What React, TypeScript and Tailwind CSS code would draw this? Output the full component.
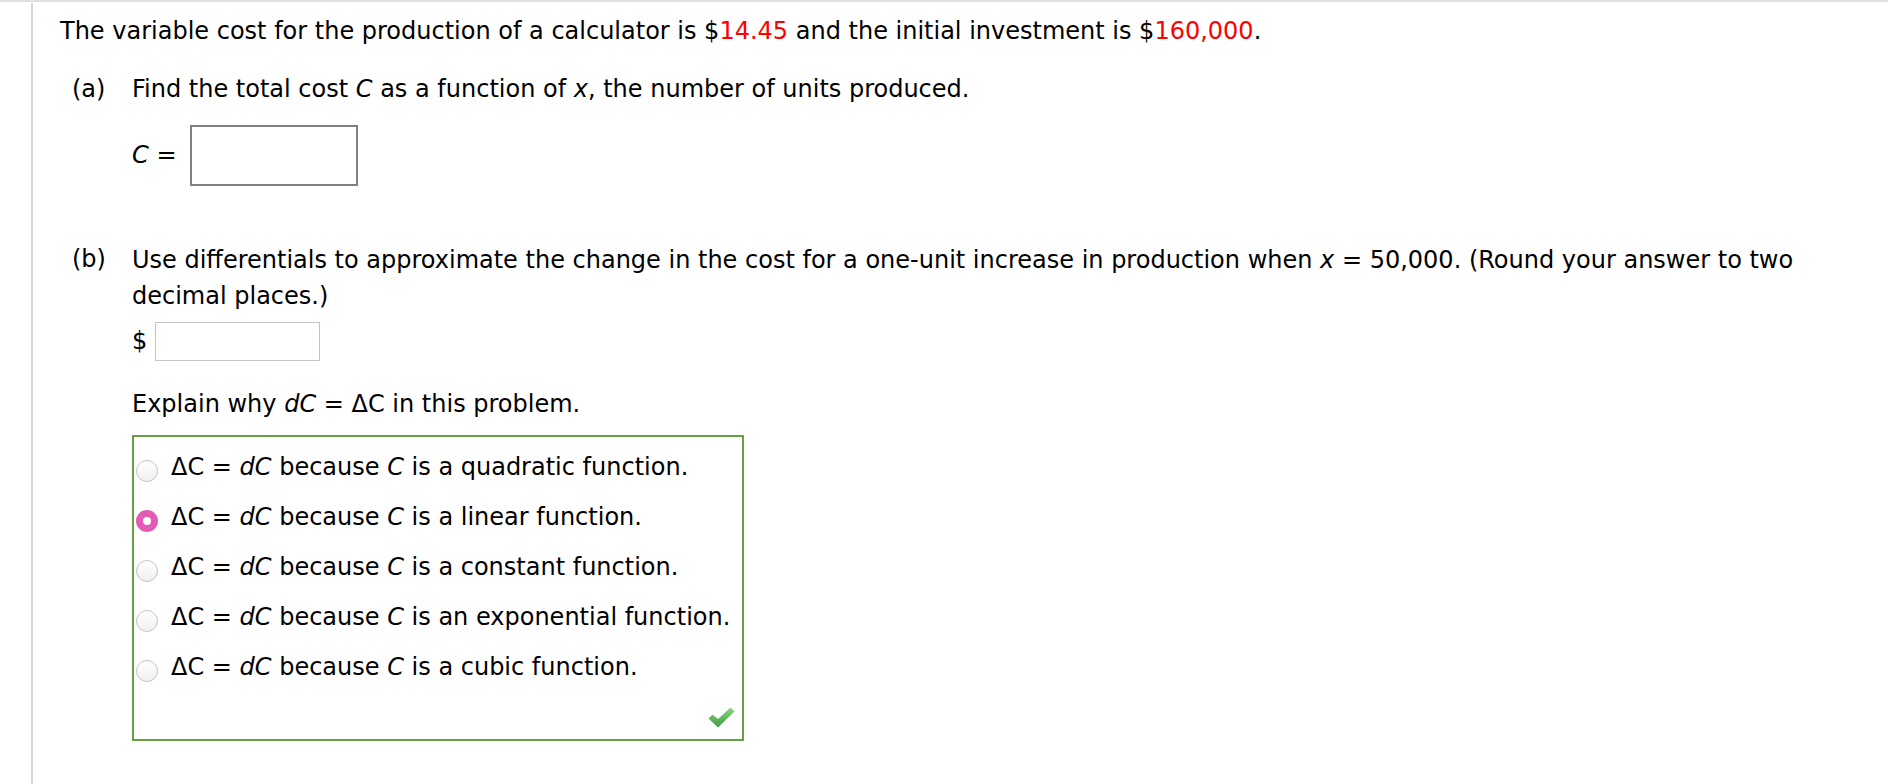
import React from "react";

const Radio = ({ checked }: { checked?: boolean }) =>
  checked ? (
    <span className="ml-[2px] mt-[8px] flex h-[22px] w-[22px] shrink-0 items-center justify-center rounded-full bg-[#e35bb5]">
      <span className="h-[8px] w-[8px] rounded-full bg-white" />
    </span>
  ) : (
    <span className="ml-[2px] mt-[8px] h-[22px] w-[22px] shrink-0 rounded-full border border-[#c4c4c4] bg-linear-to-b from-white to-[#f0f0f0]" />
  );

const Option = ({ text, checked }: { text: string; checked?: boolean }) => (
  <div className="flex h-[50px] items-center">
    <Radio checked={checked} />
    <span className="ml-[13px] whitespace-nowrap">
      {"ΔC = "}
      <i>dC</i> because <i>C</i> is {text}
    </span>
  </div>
);

export default function App() {
  return (
    <div className="min-h-screen bg-white font-['DejaVu_Sans',Verdana,sans-serif] text-[24px] leading-[35px] text-black">
      <div className="h-[2px] bg-[#e0e0e0]" />
      <div className="flex min-h-[782px]">
        <div className="w-[31px] shrink-0" />
        <div className="mt-[1px] flex-1 border-l-2 border-[#d4d4d4] pl-[27px] pr-[40px] pt-[11px]">
          <p>
            The variable cost for the production of a calculator is $
            <span className="text-[#ff0000]">14.45</span> and the initial investment is $
            <span className="text-[#ff0000]">160,000</span>.
          </p>

          <div className="mt-[23px] flex">
            <div className="w-[72px] shrink-0 pl-[12px]">(a)</div>
            <div className="flex-1">
              <p>
                Find the total cost <i>C</i> as a function of <i>x</i>, the number of units produced.
              </p>
              <div className="mt-[18px] flex items-center">
                <span className="mr-[13px]">
                  <i>C</i> =
                </span>
                <div className="h-[61px] w-[168px] border-2 border-[#808080]" />
              </div>
            </div>
          </div>

          <div className="mt-[56px] flex">
            <div className="w-[72px] shrink-0 pl-[12px]">(b)</div>
            <div className="flex-1">
              <p className="leading-[36px]">
                Use differentials to approximate the change in the cost for a one-unit increase in production when{" "}
                <i>x</i> = 50,000. (Round your answer to two decimal places.)
              </p>
              <div className="mt-[8px] flex items-center">
                <span className="mr-[8px]">$</span>
                <div className="h-[39px] w-[165px] border border-[#c4c4c4]" />
              </div>
              <p className="mt-[26px]">
                Explain why <i>dC</i> = ΔC in this problem.
              </p>
              <div className="mt-[13px] w-[612px] border-2 border-[#67a043]">
                <div className="pt-[5px]">
                  <Option text="a quadratic function." />
                  <Option text="a linear function." checked />
                  <Option text="a constant function." />
                  <Option text="an exponential function." />
                  <Option text="a cubic function." />
                </div>
                <div className="flex justify-end pb-[11px] pr-[7px] pt-[15px]">
                  <svg width="27" height="21" viewBox="0 0 27 21">
                    <defs>
                      <linearGradient id="chk" x1="0" y1="0" x2="0" y2="1">
                        <stop offset="0" stopColor="#8fd47f" />
                        <stop offset="1" stopColor="#419c46" />
                      </linearGradient>
                    </defs>
                    <path d="M0.5 11.5 L4.5 7.5 L10 12 L22.5 0.5 L26.5 4.5 L10 20.5 Z" fill="url(#chk)" />
                  </svg>
                </div>
              </div>
            </div>
          </div>
        </div>
      </div>
    </div>
  );
}
